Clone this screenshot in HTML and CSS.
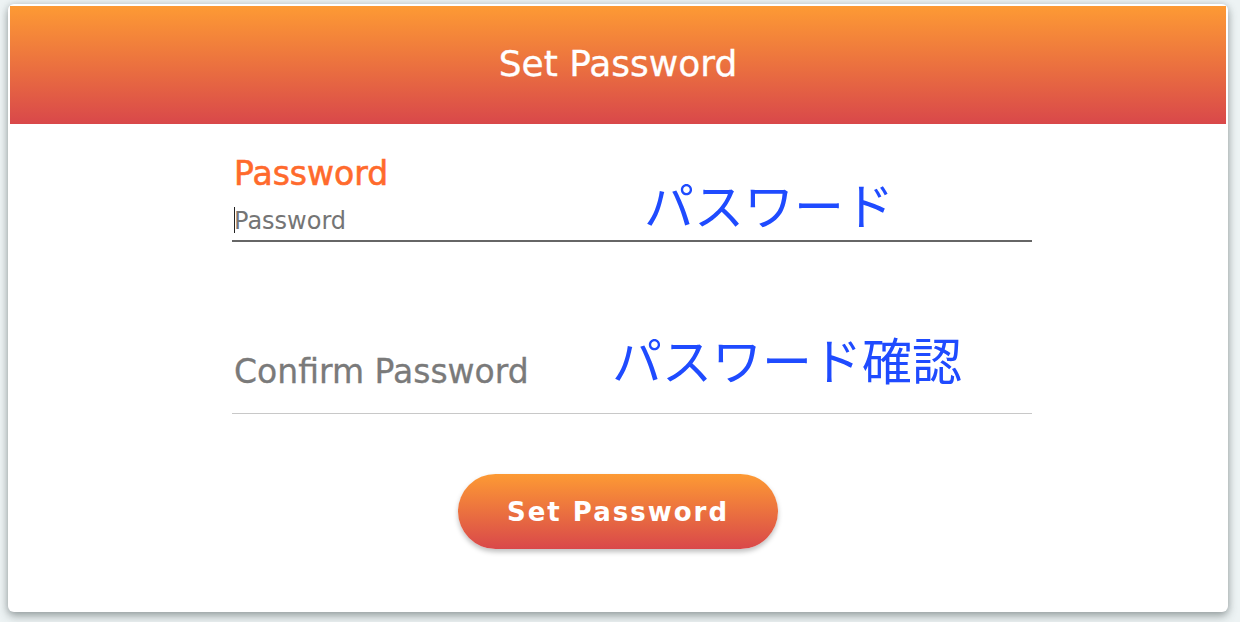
FILE: index.html
```html
<!DOCTYPE html>
<html lang="en">
<head>
<meta charset="utf-8">
<title>Set Password</title>
<link rel="stylesheet" href="styles.css">
</head>
<body>
<div class="card">
  <header class="card-header">
    <h1 class="title">Set Password</h1>
  </header>
  <form class="form">
    <div class="field field-active">
      <label class="label label-active" for="pw">Password</label>
      <div class="input-wrap">
        <span class="caret"></span>
        <input id="pw" class="input" type="password" placeholder="Password">
      </div>
      <span class="note note-1">パスワード</span>
    </div>
    <div class="field field-idle">
      <label class="label label-idle" for="pw2">Confirm Password</label>
      <span class="note note-2">パスワード確認</span>
    </div>
    <div class="actions">
      <button type="button" class="btn">Set Password</button>
    </div>
  </form>
</div>
</body>
</html>
```

FILE: styles.css
```css
html, body {
  margin: 0;
  padding: 0;
}
body {
  background: #edf3f4;
  font-family: "DejaVu Sans", "Noto Sans", sans-serif;
  width: 1240px;
  height: 622px;
  overflow: hidden;
}
.card {
  box-sizing: border-box;
  margin: 4px 0 0 8px;
  width: 1220px;
  height: 608px;
  padding: 2px;
  background: #fff;
  border-radius: 6px;
  box-shadow: 0 4px 10px rgba(60, 70, 72, 0.45), 0 0 6px rgba(60, 70, 72, 0.15);
}
.card-header {
  height: 118px;
  background: linear-gradient(to bottom, #fd9a34, #d9484a);
  display: flex;
  align-items: center;
  justify-content: center;
}
.title {
  margin: 0;
  color: #fff;
  font-weight: normal;
  font-size: 36px;
  line-height: 40px;
  padding-bottom: 2px;
  -webkit-text-stroke: 0.3px #fff;
}
.form {
  width: 800px;
  margin-left: 222px;
  padding-top: 30px;
}
.field {
  position: relative;
}
.field-active {
  border-bottom: 2px solid #666;
}
.label {
  display: block;
  font-size: 33px;
  line-height: 40px;
}
.label-active {
  color: #ff6a2c;
  padding-left: 2px;
  -webkit-text-stroke: 0.6px #ff6a2c;
}
.input-wrap {
  box-sizing: border-box;
  display: flex;
  align-items: center;
  height: 46px;
  padding-top: 7px;
  padding-left: 2px;
}
.caret {
  width: 1px;
  height: 26px;
  background: #222;
  margin-right: -1px;
  margin-top: -2px;
}
.input {
  border: 0;
  outline: 0;
  padding: 0;
  margin: 0;
  width: 700px;
  font-family: inherit;
  font-size: 24px;
  color: #555;
  background: transparent;
}
.input::placeholder {
  color: #757575;
}
.field-idle {
  margin-top: 106px;
  border-bottom: 1px solid #c8c8c8;
  height: 65px;
}
.label-idle {
  color: #7a7a7a;
  padding-left: 2px;
  padding-top: 4px;
  -webkit-text-stroke: 0.3px #7a7a7a;
}
.note {
  position: absolute;
  color: #1f4bff;
  font-family: "Noto Sans CJK JP", sans-serif;
  font-size: 50px;
  line-height: 56px;
  white-space: nowrap;
}
.note-1 {
  left: 412px;
  top: 21px;
}
.note-2 {
  left: 380px;
  top: -18px;
}
.actions {
  display: flex;
  justify-content: center;
  margin-top: 60px;
  padding-right: 28px;
}
.btn {
  width: 320px;
  height: 75px;
  border: 0;
  border-radius: 38px;
  background: linear-gradient(to bottom, #fd9a34, #d9484a);
  color: #fff;
  font-family: inherit;
  font-size: 26px;
  font-weight: bold;
  letter-spacing: 2px;
  box-shadow: 0 3px 5px rgba(0, 0, 0, 0.25);
  cursor: pointer;
}
```
